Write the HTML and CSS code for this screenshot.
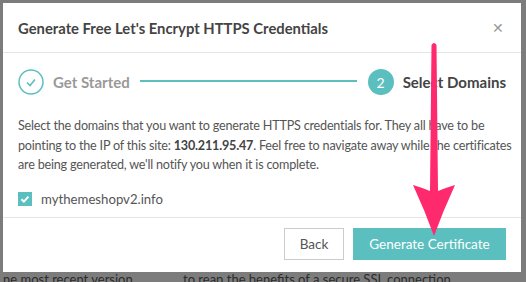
FILE: index.html
```html
<!DOCTYPE html>
<html>
<head>
<meta charset="utf-8">
<link rel="stylesheet" href="styles.css">
</head>
<body>
<div class="page">
  <div class="modal">
    <div class="modal-header">
      <h1 class="modal-title">Generate Free Let's Encrypt HTTPS Credentials</h1>
      <span class="close">&#x2715;</span>
    </div>
    <div class="steps">
      <div class="step done">
        <span class="step-icon">
          <svg width="26" height="26" viewBox="0 0 26 26"><circle cx="13" cy="13" r="12" fill="none" stroke="#5bbfbf" stroke-width="1.5"/><path d="M9 13.5l3 3 5-6" fill="none" stroke="#5bbfbf" stroke-width="1.6"/></svg>
        </span>
        <span class="step-label">Get Started</span>
      </div>
      <div class="step-line"></div>
      <div class="step active">
        <span class="step-num">2</span>
        <span class="step-label">Select Domains</span>
      </div>
    </div>
    <div class="modal-body">
      <p class="desc">Select the domains that you want to generate HTTPS credentials for. They all have to be pointing to the IP of this site: <b>130.211.95.47</b>. Feel free to navigate away while the certificates are being generated, we'll notify you when it is complete.</p>
      <label class="domain">
        <span class="checkbox"><svg width="14" height="14" viewBox="0 0 14 14"><path d="M3.5 7.2l2.4 2.4 4.6-5" fill="none" stroke="#fff" stroke-width="2"/></svg></span>
        <span>mythemeshopv2.info</span>
      </label>
    </div>
    <div class="modal-footer">
      <button class="btn btn-default">Back</button>
      <button class="btn btn-primary">Generate Certificate</button>
    </div>
  </div>
  <div class="behind">
    <span class="b1">ne most recent version.</span>
    <span class="b2">to reap the benefits of a secure SSL connection.</span>
  </div>
  <svg class="arrow" width="60" height="200" viewBox="0 0 60 200">
    <path d="M26.5 4 Q29 0 31.5 4 L33 150 Q40 147 50 144 Q38 170 29 195 Q20 170 8 144 Q18 147 25 150 Z" fill="#ff2a6d"/>
  </svg>
</div>
</body>
</html>
```

FILE: styles.css
```css
html, body {
  margin: 0;
  padding: 0;
}
body {
  background: #7c7c7c;
  font-family: Lato, "Open Sans", sans-serif;
  width: 526px;
  height: 282px;
  overflow: hidden;
}
.page {
  position: relative;
  padding: 3px 5px 0 3px;
  height: 279px;
}
.modal {
  background: #fff;
  width: 518px;
  height: 269px;
  display: flex;
  flex-direction: column;
  box-sizing: border-box;
}
.modal-header {
  height: 49px;
  display: flex;
  align-items: center;
  justify-content: space-between;
  padding: 0 15px 0 15px;
  border-bottom: 1px solid #e5e5e5;
  flex: none;
}
.modal-title {
  margin: 0;
  font-size: 14.8px;
  font-weight: 700;
  color: #444;
}
.close {
  color: #999;
  font-size: 14px;
  margin-right: 2px;
}
.steps {
  display: flex;
  align-items: center;
  padding: 16px 15px 0 15px;
  height: 26px;
}
.step {
  display: flex;
  align-items: center;
  gap: 9px;
}
.step-icon {
  display: flex;
  width: 26px;
  height: 26px;
}
.step-label {
  font-size: 15px;
  font-weight: 700;
  color: #999;
}
.step.active .step-label {
  color: #444;
}
.step-num {
  width: 26px;
  height: 26px;
  border-radius: 50%;
  background: #5bbfbf;
  color: #fff;
  font-size: 14px;
  display: flex;
  align-items: center;
  justify-content: center;
}
.step-line {
  flex: 1;
  height: 1.5px;
  background: #5bbfbf;
  margin: -2px 11px 0 10px;
}
.modal-body {
  padding: 21px 8px 0 15px;
  flex: 1;
}
.desc {
  margin: 0;
  font-size: 12.6px;
  letter-spacing: -0.2px;
  line-height: 19.5px;
  color: #555;
}
.desc b {
  color: #444;
}
.domain {
  display: flex;
  align-items: center;
  gap: 9px;
  margin-top: 16px;
  font-size: 13.2px;
  color: #555;
}
.checkbox {
  width: 14px;
  height: 14px;
  background: #5bbfbf;
  display: flex;
}
.modal-footer {
  flex: none;
  height: 44px;
  border-top: 1px solid #e5e5e5;
  display: flex;
  justify-content: flex-end;
  align-items: flex-start;
  gap: 9px;
  padding: 10px 15px 0 0;
}
.btn {
  font-family: inherit;
  font-size: 13.5px;
  height: 32px;
  border-radius: 0;
  cursor: pointer;
}
.btn-default {
  background: #fff;
  border: 1px solid #ccc;
  color: #555;
  width: 60px;
}
.btn-primary {
  background: #5bbfbf;
  border: 1px solid #5bbfbf;
  color: #fff;
  width: 153px;
}
.behind {
  display: flex;
  font-size: 13px;
  color: #2b2b2b;
  margin-top: -1px;
  white-space: nowrap;
}
.b1 {
  width: 180px;
}
.arrow {
  position: absolute;
  left: 405px;
  top: 41px;
}
```
